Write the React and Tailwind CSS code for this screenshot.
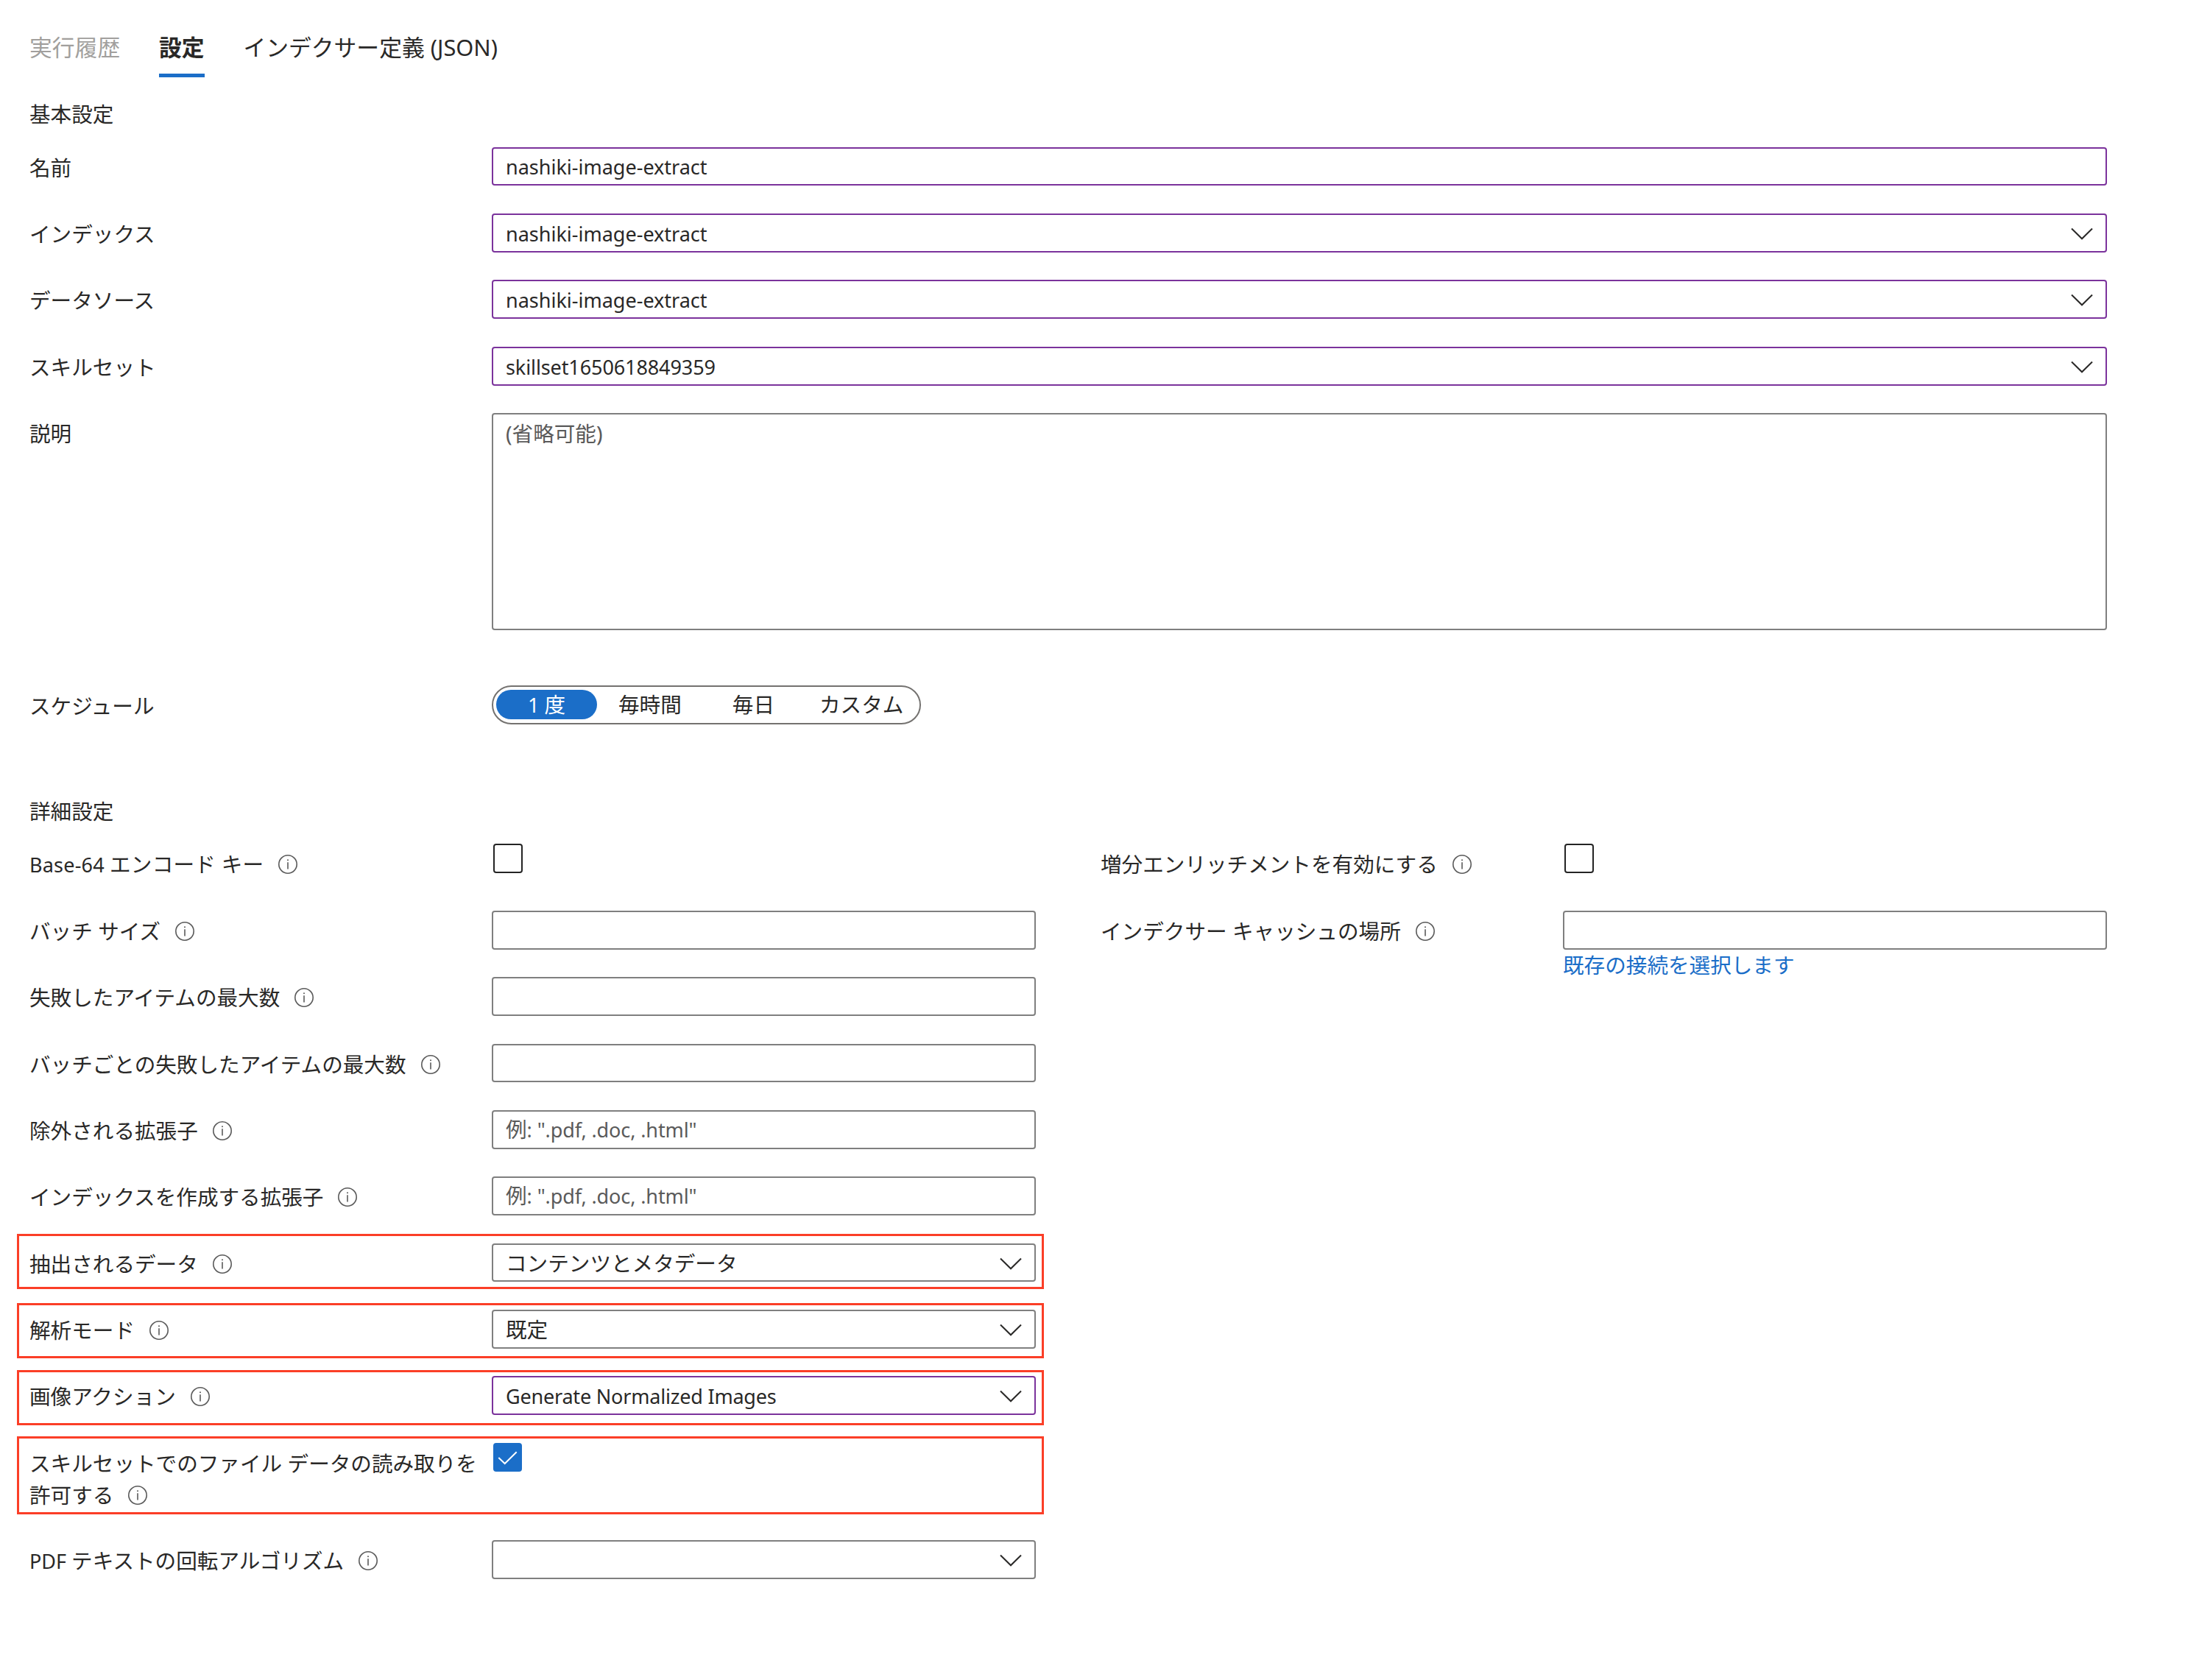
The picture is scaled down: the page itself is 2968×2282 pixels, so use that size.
import React from "react";

const borders = {
  purple: "border-[#7b339c]",
  gray: "border-[#7f7f7f]",
};

const InfoIcon = () => (
  <svg
    viewBox="0 0 26 26"
    fill="none"
    className="inline-block w-[26px] h-[26px] ml-[20px] align-[-2px] text-[#5a5a5a]"
  >
    <circle cx="13" cy="13" r="12.2" stroke="currentColor" strokeWidth="1.6" />
    <path d="M13 10.2v9.4" stroke="currentColor" strokeWidth="1.6" />
    <circle cx="13" cy="7.3" r="1" fill="currentColor" />
  </svg>
);

const Chevron = () => (
  <svg
    viewBox="0 0 30 17"
    fill="none"
    className="w-[30px] h-[17px] mt-px shrink-0"
  >
    <path d="M1 1.5 15 15.3 29 1.5" stroke="#292827" strokeWidth="2" />
  </svg>
);

const Latin = ({ className = "", children }) => (
  <span className={`text-[27px] ${className}`}>{children}</span>
);

const Row = ({ label, info, frame, className = "h-[90.4px]", children }) => (
  <div className={`relative flex items-start ${className}`}>
    <div className="w-[628px] shrink-0 pt-[6px] leading-[43.6px]">
      {label}
      {info && <InfoIcon />}
    </div>
    {children}
    {frame && (
      <div
        className={`absolute -left-[17px] w-[1395px] border-[3px] border-[#fb3e27] ${frame}`}
      />
    )}
  </div>
);

const TextField = ({ value, placeholder, color = "gray" }) => (
  <div
    className={`flex-1 h-[52.8px] border-2 rounded-[4px] px-[17px] leading-[47px] ${borders[color]}`}
  >
    {value}
    {placeholder && <span className="text-[#5a5a5a]">{placeholder}</span>}
  </div>
);

const Select = ({ value, color = "gray" }) => (
  <div
    className={`flex flex-1 items-center justify-between h-[52.8px] border-2 rounded-[4px] px-[17px] pt-px leading-[49px] ${borders[color]}`}
  >
    <span>{value}</span>
    <Chevron />
  </div>
);

const Checkbox = ({ checked }) => (
  <div
    className={`ml-[2px] rounded-[4px] ${
      checked
        ? "w-[39px] h-[39px] bg-[#1b6ec8]"
        : "w-[40px] h-[40px] border-2 border-[#242424]"
    }`}
  >
    {checked && (
      <svg viewBox="0 0 39 39" fill="none" className="w-[39px] h-[39px]">
        <path d="M7.3 20 15.7 28 31.7 12.2" stroke="white" strokeWidth="2" />
      </svg>
    )}
  </div>
);

const Tabs = () => (
  <div className="flex gap-[52.8px] h-[105px] pt-[42px] text-[30.8px] leading-[44px]">
    <div className="text-[#a19f9d]">実行履歴</div>
    <div className="border-b-[5px] border-[#1b6ec8] font-bold">設定</div>
    <div>インデクサー定義 (JSON)</div>
  </div>
);

const Schedule = () => (
  <div className="flex items-center w-[583px] h-[53px] mt-[0.4px] border-2 border-[#747270] rounded-full pl-[4px] leading-[40px]">
    <div className="w-[137px] h-[40px] rounded-full bg-[#1b6ec8] text-white text-center">
      <Latin>1 </Latin>度
    </div>
    <div className="ml-[29px]">毎時間</div>
    <div className="ml-[69px]">毎日</div>
    <div className="ml-[61px]">カスタム</div>
  </div>
);

const example = (
  <>
    例<Latin className="tracking-[-0.1px]">: ".pdf, .doc, .html"</Latin>
  </>
);

const App = () => {
  return (
    <div
      lang="ja"
      className="w-[2968px] h-[2282px] overflow-hidden bg-white pl-[40px] pr-[106px] font-['Noto_Sans','Noto_Sans_CJK_JP',sans-serif] text-[28.6px] text-[#292827]"
    >
      <Tabs />
      <h2 className="h-[94.6px] pt-[28px] leading-[44px]">基本設定</h2>
      <Row label="名前">
        <TextField color="purple" value={<Latin>nashiki-image-extract</Latin>} />
      </Row>
      <Row label="インデックス">
        <Select color="purple" value={<Latin>nashiki-image-extract</Latin>} />
      </Row>
      <Row label="データソース">
        <Select color="purple" value={<Latin>nashiki-image-extract</Latin>} />
      </Row>
      <Row label="スキルセット">
        <Select
          color="purple"
          value={<Latin className="tracking-[-0.1px]">skillset1650618849359</Latin>}
        />
      </Row>
      <Row label="説明" className="h-[369.4px]">
        <div className="flex-1 h-[295px] border-2 border-[#7f7f7f] rounded-[4px] px-[17px] pt-[3px] leading-[46px] text-[#5a5a5a]">
          (省略可能)
        </div>
      </Row>
      <Row label="スケジュール" className="h-[144.6px]">
        <Schedule />
      </Row>
      <h2 className="h-[71.2px] pt-[5px] leading-[44px]">詳細設定</h2>

      <div className="flex gap-[88px]">
        <div className="w-[1367px]">
          <Row
            label={
              <span className="tracking-[0.2px]">
                <Latin>Base-64 </Latin>エンコード キー
              </span>
            }
            info
          >
            <Checkbox />
          </Row>
          <Row label="バッチ サイズ" info>
            <TextField />
          </Row>
          <Row label="失敗したアイテムの最大数" info>
            <TextField />
          </Row>
          <Row label="バッチごとの失敗したアイテムの最大数" info>
            <TextField />
          </Row>
          <Row label="除外される拡張子" info>
            <TextField placeholder={example} />
          </Row>
          <Row label="インデックスを作成する拡張子" info>
            <TextField placeholder={example} />
          </Row>
          <Row label="抽出されるデータ" info frame="-top-[13px] h-[75px]">
            <Select value="コンテンツとメタデータ" />
          </Row>
          <Row label="解析モード" info frame="-top-[9px] h-[75px]">
            <Select value="既定" />
          </Row>
          <Row label="画像アクション" info frame="-top-[8px] h-[75px]">
            <Select
              color="purple"
              value={
                <Latin className="tracking-[-0.2px]">
                  Generate Normalized Images
                </Latin>
              }
            />
          </Row>
          <Row
            label="スキルセットでのファイル データの読み取りを許可する"
            info
            frame="-top-[9px] h-[106px]"
            className="h-[132px]"
          >
            <Checkbox checked />
          </Row>
          <Row
            label={
              <>
                <Latin>PDF </Latin>テキストの回転アルゴリズム
              </>
            }
            info
          >
            <Select />
          </Row>
        </div>

        <div className="flex-1">
          <Row label="増分エンリッチメントを有効にする" info>
            <Checkbox />
          </Row>
          <Row label="インデクサー キャッシュの場所" info>
            <div className="flex-1">
              <div className="flex">
                <TextField />
              </div>
              <a className="block leading-[42px] text-[#1b6ec8]">
                既存の接続を選択します
              </a>
            </div>
          </Row>
        </div>
      </div>
    </div>
  );
};

export default App;
